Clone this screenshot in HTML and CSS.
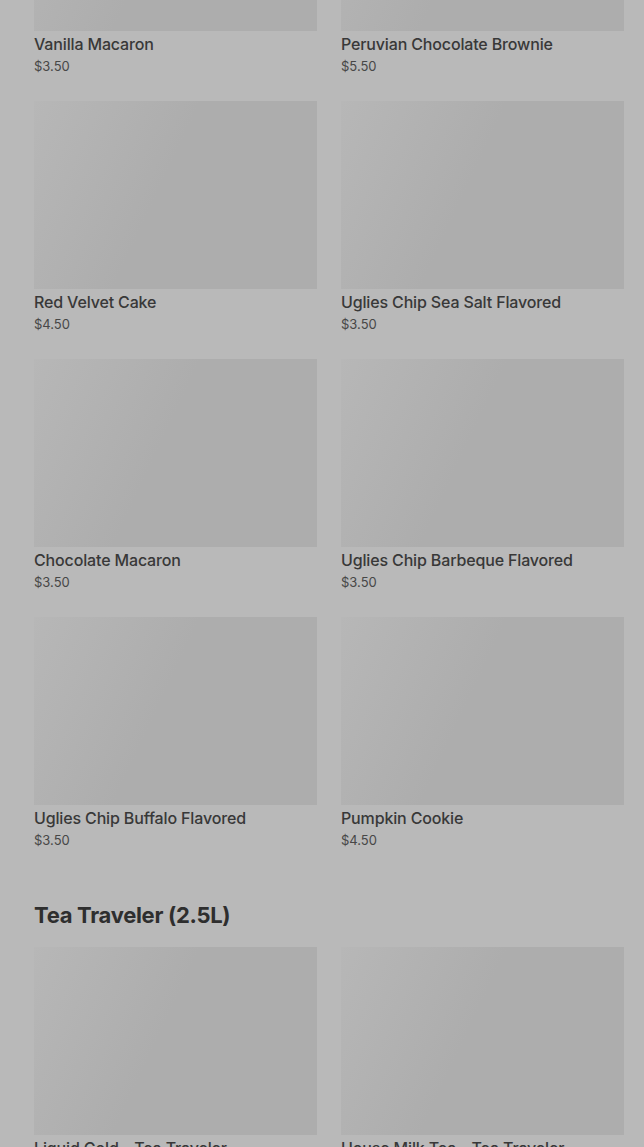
FILE: index.html
```html
<!DOCTYPE html>
<html lang="en">
  <head>
    <title>Menu</title>
    <link rel="stylesheet" href="styles.css">
  </head>
  <body>
    <main class="menu">
      <section class="category">
        <div class="items">
          <article class="item">
            <div class="photo"></div>
            <h3>Vanilla Macaron</h3>
            <p class="price">$3.50</p>
          </article>
          <article class="item">
            <div class="photo"></div>
            <h3>Peruvian Chocolate Brownie</h3>
            <p class="price">$5.50</p>
          </article>
          <article class="item">
            <div class="photo"></div>
            <h3>Red Velvet Cake</h3>
            <p class="price">$4.50</p>
          </article>
          <article class="item">
            <div class="photo"></div>
            <h3>Uglies Chip Sea Salt Flavored</h3>
            <p class="price">$3.50</p>
          </article>
          <article class="item">
            <div class="photo"></div>
            <h3>Chocolate Macaron</h3>
            <p class="price">$3.50</p>
          </article>
          <article class="item">
            <div class="photo"></div>
            <h3>Uglies Chip Barbeque Flavored</h3>
            <p class="price">$3.50</p>
          </article>
          <article class="item">
            <div class="photo"></div>
            <h3>Uglies Chip Buffalo Flavored</h3>
            <p class="price">$3.50</p>
          </article>
          <article class="item">
            <div class="photo"></div>
            <h3>Pumpkin Cookie</h3>
            <p class="price">$4.50</p>
          </article>
        </div>
      </section>

      <section class="category">
        <h2>Tea Traveler (2.5L)</h2>
        <div class="items">
          <article class="item">
            <div class="photo"></div>
            <h3>Liquid Gold - Tea Traveler</h3>
            <p class="price">$45.00</p>
          </article>
          <article class="item">
            <div class="photo"></div>
            <h3>House Milk Tea - Tea Traveler</h3>
            <p class="price">$45.00</p>
          </article>
        </div>
      </section>
    </main>
  </body>
</html>
```

FILE: styles.css
```css
:root {
  --page-bg: #b9b9b9;
  --photo-from: #b7b7b7;
  --photo-to: #adadad;
  --title-text: #383838;
  --price-text: #474747;
  --heading-text: #2e2e2e;
}

html, body {
  background: var(--page-bg);
  margin: 0;
  overflow: hidden;
}

body {
  font-family: Inter, "Noto Sans", sans-serif;
  height: 1147px;
}

.menu {
  /* page is scrolled: first row starts above the fold */
  margin-top: -157px;
  padding: 0 20px 0 34px;
}

.category h2 {
  margin: 49px 0 17px;
  font-size: 22px;
  line-height: 30px;
  font-weight: 700;
  letter-spacing: -0.3px;
  color: var(--heading-text);
}

.items {
  display: grid;
  grid-template-columns: repeat(2, 1fr);
  column-gap: 24px;
  row-gap: 24px;
}

.item .photo {
  height: 188px;
  background: linear-gradient(115deg, var(--photo-from) 0%, var(--photo-to) 45%, var(--photo-to) 100%);
}

.item h3 {
  margin: 2px 0 0;
  font-size: 16px;
  line-height: 22px;
  font-weight: 500;
  letter-spacing: -0.15px;
  color: var(--title-text);
}

.item .price {
  margin: 1px 0 0;
  font-size: 13px;
  line-height: 21px;
  color: var(--price-text);
}
```
